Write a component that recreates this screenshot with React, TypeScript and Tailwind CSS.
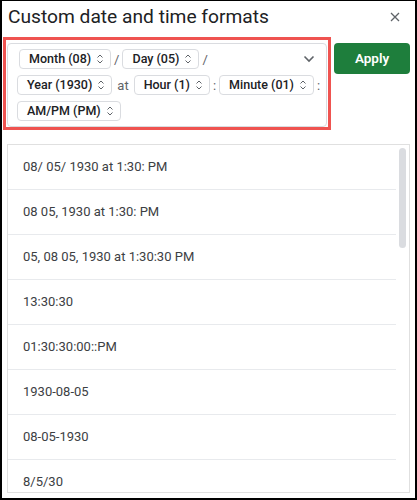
import React from 'react';

const font = { fontFamily: 'Roboto, "Liberation Sans", sans-serif' };

function UpDown() {
  return (
    <svg width="8" height="12" viewBox="0 0 8 12" fill="none" stroke="#5f6368" strokeWidth="1">
      <path d="M1.5 4.5 L4 2 L6.5 4.5" />
      <path d="M1.5 7.5 L4 10 L6.5 7.5" />
    </svg>
  );
}

function Chip({ label }: { label: string }) {
  return (
    <div className="flex h-[20px] shrink-0 items-center gap-[5px] whitespace-nowrap rounded-[4px] border border-[#dadce0] pl-[9px] pr-[6px] text-[12.5px] font-medium leading-none text-[#202124]">
      <span>{label}</span>
      <UpDown />
    </div>
  );
}

function Sep({ text }: { text: string }) {
  return <span className="shrink-0 px-[1px] text-[13px] leading-none text-[#5f6368]">{text}</span>;
}

const formats = [
  '08/ 05/ 1930 at 1:30: PM',
  '08 05, 1930 at 1:30: PM',
  '05, 08 05, 1930 at 1:30:30 PM',
  '13:30:30',
  '01:30:30:00::PM',
  '1930-08-05',
  '08-05-1930',
  '8/5/30',
];

export default function App() {
  return (
    <div
      className="flex h-[500px] w-[417px] flex-col overflow-hidden border-x-2 border-b-2 border-t border-black bg-white"
      style={font}
    >
      {/* Header */}
      <div className="flex h-[36px] shrink-0 items-start justify-between pl-[6px] pr-[15px] pt-[4px]">
        <h1 className="text-[19.2px] leading-6 text-[#202124]">Custom date and time formats</h1>
        <svg className="mt-[7px]" width="10" height="10" viewBox="0 0 10 10" stroke="#5f6368" strokeWidth="1.3">
          <path d="M1 1 L9 9 M9 1 L1 9" />
        </svg>
      </div>

      {/* Format builder + apply */}
      <div className="flex shrink-0 items-start gap-[3px] pl-[1px] pr-[6px]">
        <div className="w-[328px] shrink-0 border-[3px] border-[#ef5350] px-[1px] pt-[3px]">
          <div className="flex flex-col gap-[6px] rounded-[4px] border border-[#dadce0] pb-[5px] pl-[9px] pr-[11px] pt-[5px]">
            <div className="flex items-center justify-between">
              <div className="flex items-center gap-[2px] pl-[2px]">
                <Chip label="Month (08)" />
                <Sep text="/" />
                <Chip label="Day (05)" />
                <Sep text="/" />
              </div>
              <svg width="12" height="8" viewBox="0 0 12 8" fill="none" stroke="#5f6368" strokeWidth="1.6">
                <path d="M1.5 1.5 L6 6 L10.5 1.5" />
              </svg>
            </div>
            <div className="flex items-center gap-[2px]">
              <Chip label="Year (1930)" />
              <span className="shrink-0 px-[3px] text-[13px] leading-none text-[#5f6368]">at</span>
              <Chip label="Hour (1)" />
              <Sep text=":" />
              <Chip label="Minute (01)" />
              <Sep text=":" />
            </div>
            <div className="flex items-center">
              <Chip label="AM/PM (PM)" />
            </div>
          </div>
        </div>
        <button className="mt-[6px] h-[31px] w-[76px] shrink-0 rounded-[4px] bg-[#1e7e3c] text-[13.5px] font-semibold text-white">
          Apply
        </button>
      </div>

      {/* Format list */}
      <div className="mx-[5px] mt-[14px] flex h-[349px] shrink-0 overflow-hidden border border-[#e0e0e0]">
        <div className="flex-1">
          {formats.map((f) => (
            <div
              key={f}
              className="flex h-[45px] items-center border-b border-[#e8eaed] pl-[15px] text-[13px] text-[#3c4043]"
            >
              {f}
            </div>
          ))}
        </div>
        <div className="ml-[3px] mr-[3px] mt-[3px] h-[100px] w-[7px] rounded-full bg-[#dadce0]" />
      </div>
    </div>
  );
}
